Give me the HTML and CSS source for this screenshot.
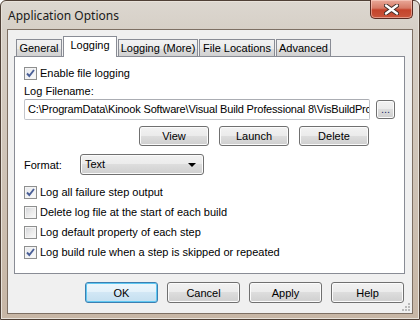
FILE: index.html
```html
<!DOCTYPE html>
<html lang="en">
<head>
    <meta charset="UTF-8">
    <title>Application Options</title>
    <link rel="stylesheet" href="styles.css">
</head>
<body>
<div class="window">
    <div class="titlebar">
        <span class="title">Application Options</span>
        <button class="close-button" aria-label="Close">
            <svg width="15" height="11" viewBox="0 0 15 11">
                <path d="M2 1.5 L13 9.5 M13 1.5 L2 9.5" stroke="#3b2a26" stroke-width="4.2" stroke-linecap="round"/>
                <path d="M2 1.5 L13 9.5 M13 1.5 L2 9.5" stroke="#ffffff" stroke-width="2.4" stroke-linecap="round"/>
            </svg>
        </button>
    </div>

    <div class="client">
        <div class="tabs">
            <div class="tab tab-general">General</div>
            <div class="tab tab-logging active">Logging</div>
            <div class="tab tab-more">Logging (More)</div>
            <div class="tab tab-files">File Locations</div>
            <div class="tab tab-advanced">Advanced</div>
        </div>

        <div class="panel">
            <label class="check first-check"><span class="box checked"></span>Enable file logging</label>
            <div class="field-label">Log Filename:</div>
            <div class="file-row">
                <div class="textbox"><span class="path">C:\ProgramData\Kinook Software\Visual Build Professional 8\VisBuildPro</span></div>
                <button class="btn browse-button">...</button>
            </div>
            <div class="actions">
                <button class="btn action-button">View</button>
                <button class="btn action-button">Launch</button>
                <button class="btn action-button">Delete</button>
            </div>
            <div class="format-row">
                <span class="format-label">Format:</span>
                <div class="combo">Text<span class="arrow"></span></div>
            </div>
            <div class="checks">
                <label class="check"><span class="box checked"></span>Log all failure step output</label>
                <label class="check"><span class="box"></span>Delete log file at the start of each build</label>
                <label class="check"><span class="box"></span>Log default property of each step</label>
                <label class="check"><span class="box checked"></span>Log build rule when a step is skipped or repeated</label>
            </div>
        </div>

        <div class="footer">
            <button class="btn dialog-button default">OK</button>
            <button class="btn dialog-button">Cancel</button>
            <button class="btn dialog-button">Apply</button>
            <button class="btn dialog-button">Help</button>
        </div>

        <!-- size grip in the corner -->
        <svg class="grip" width="9" height="9" viewBox="0 0 9 9">
            <rect x="6" y="0" width="2" height="2" fill="#b9b9b9"/>
            <rect x="3" y="3" width="2" height="2" fill="#b9b9b9"/>
            <rect x="6" y="3" width="2" height="2" fill="#b9b9b9"/>
            <rect x="0" y="6" width="2" height="2" fill="#b9b9b9"/>
            <rect x="3" y="6" width="2" height="2" fill="#b9b9b9"/>
            <rect x="6" y="6" width="2" height="2" fill="#b9b9b9"/>
        </svg>
    </div>
</div>
</body>
</html>
```

FILE: styles.css
```css
body {
    margin: 0;
    width: 420px;
    height: 320px;
    overflow: hidden;
    background: #ffffff;
    font-family: "Liberation Sans", Arial, sans-serif;
    font-size: 11px;
    color: #000000;
}
.window {
    box-sizing: border-box;
    width: 420px;
    height: 320px;
    border: 1px solid #4f4036;
    border-radius: 6px 6px 0 0;
    padding: 0 6px 5px 6px;
    display: flex;
    flex-direction: column;
    background: linear-gradient(to bottom, #dcd7d0 0, #d6cfc6 30px, #c7b6a5 100%);
    box-shadow: inset 0 0 0 1px #e8e2da;
}
.titlebar {
    height: 28px;
    display: flex;
    justify-content: space-between;
    align-items: flex-start;
    margin-left: 1px;
}
.title {
    margin-top: 7px;
    font-family: "Noto Sans", "Open Sans", sans-serif;
    font-size: 12px;
    line-height: 16px;
    color: #1a1a1a;
}
.close-button {
    box-sizing: border-box;
    width: 43px;
    height: 19px;
    margin-top: -1px;
    padding: 0;
    border: 1px solid #5a2b22;
    border-top: none;
    border-radius: 0 0 5px 5px;
    background: linear-gradient(to bottom, #e9a999 0, #d67a66 45%, #c4432b 55%, #c9563c 100%);
    box-shadow: inset 0 0 0 1px rgba(255, 220, 210, 0.5);
    display: flex;
    align-items: center;
    justify-content: center;
}
.client {
    position: relative;
    flex: 1;
    display: flex;
    flex-direction: column;
    border: 1px solid #7d6f63;
    background: #f0f0f0;
    padding: 7px 7px 0 6px;
}

/* tabs */
.tabs {
    display: flex;
    align-items: flex-end;
    gap: 1px;
    height: 20px;
    padding-left: 2px;
    margin-bottom: -1px;
}
.tab {
    box-sizing: border-box;
    height: 18px;
    border: 1px solid #898c95;
    border-bottom: none;
    background: linear-gradient(to bottom, #f2f2f2 0, #ebebeb 50%, #dddddd 51%, #cfcfcf 100%);
    text-align: center;
    line-height: 17px;
    white-space: nowrap;
}
.tab.active {
    position: relative;
    z-index: 1;
    height: 21px;
    background: #ffffff;
    line-height: 17px;
}
.tab-general { width: 46px; }
.tab-logging { width: 54px; }
.tab-more { width: 80px; }
.tab-files { width: 76px; }
.tab-advanced { width: 55px; }

.panel {
    box-sizing: border-box;
    width: 391px;
    height: 218px;
    border: 1px solid #898c95;
    background: #ffffff;
    padding: 8px 0 0 9px;
    display: flex;
    flex-direction: column;
}

/* checkboxes */
.check {
    display: flex;
    align-items: center;
    height: 20px;
    white-space: nowrap;
}
.first-check {
    height: 16px;
}
.box {
    box-sizing: border-box;
    width: 13px;
    height: 13px;
    margin-right: 3px;
    border: 1px solid #8e8f8f;
    background: linear-gradient(135deg, #d2d4d8 0, #eeeeee 60%, #fbfbfb 100%);
    box-shadow: inset 0 0 0 1px #f4f4f4;
}
.box.checked {
    background-color: #f4f4f4;
    background-image: url("data:image/svg+xml;utf8,<svg xmlns='http://www.w3.org/2000/svg' width='11' height='11' viewBox='0 0 11 11'><path d='M2 5.5 L4.3 8 L9 2' fill='none' stroke='%234a5f97' stroke-width='1.9'/></svg>"), linear-gradient(135deg, #e6e8ec 0, #fbfbfb 100%);
    background-repeat: no-repeat;
}
.field-label {
    margin-top: 2px;
    height: 16px;
    line-height: 16px;
}

/* log file row */
.file-row {
    display: flex;
    align-items: flex-start;
    gap: 6px;
}
.textbox {
    box-sizing: border-box;
    width: 346px;
    height: 21px;
    padding: 0 2px 0 3px;
    border: 1px solid #c3c6cc;
    border-top-color: #abadb3;
    border-radius: 2px;
    background: #ffffff;
    line-height: 19px;
    white-space: nowrap;
    overflow: hidden;
}
.path {
    letter-spacing: -0.17px;
}
.btn {
    box-sizing: border-box;
    padding: 0;
    border: 1px solid #707070;
    border-radius: 3px;
    background: linear-gradient(to bottom, #f2f2f2 0, #ebebeb 49%, #dddddd 50%, #cfcfcf 100%);
    box-shadow: inset 0 0 0 1px #fbfbfb;
    font-family: "Liberation Sans", Arial, sans-serif;
    font-size: 11px;
    color: #000000;
}
.browse-button {
    width: 19px;
    height: 19px;
    margin-top: 1px;
    line-height: 17px;
    color: #1c2f6b;
}
.actions {
    width: 345px;
    display: flex;
    justify-content: flex-end;
    gap: 10px;
    margin-top: 6px;
}
.action-button {
    width: 70px;
    height: 20px;
}

/* format */
.format-row {
    display: flex;
    align-items: center;
    margin-top: 8px;
}
.format-label {
    width: 56px;
}
.combo {
    box-sizing: border-box;
    position: relative;
    width: 124px;
    height: 21px;
    padding-left: 4px;
    border: 1px solid #707070;
    border-radius: 3px;
    background: linear-gradient(to bottom, #f2f2f2 0, #ebebeb 49%, #dddddd 50%, #cfcfcf 100%);
    box-shadow: inset 0 0 0 1px #fbfbfb;
    line-height: 18px;
}
.arrow {
    position: absolute;
    right: 7px;
    top: 8px;
    border-left: 4px solid transparent;
    border-right: 4px solid transparent;
    border-top: 4px solid #000000;
}
.checks {
    margin-top: 7px;
    display: flex;
    flex-direction: column;
}

/* dialog buttons */
.footer {
    display: flex;
    justify-content: flex-end;
    gap: 9px;
    margin-top: 8px;
    padding-right: 1px;
}
.dialog-button {
    width: 73px;
    height: 21px;
}
.dialog-button.default {
    border-color: #3c7fb1;
    background: linear-gradient(to bottom, #eef7fc 0, #e3f1fa 49%, #d2e7f5 50%, #c4dff0 100%);
    box-shadow: inset 0 0 0 1px #5fc8f2;
}
.grip {
    position: absolute;
    right: 1px;
    bottom: 1px;
}
```
